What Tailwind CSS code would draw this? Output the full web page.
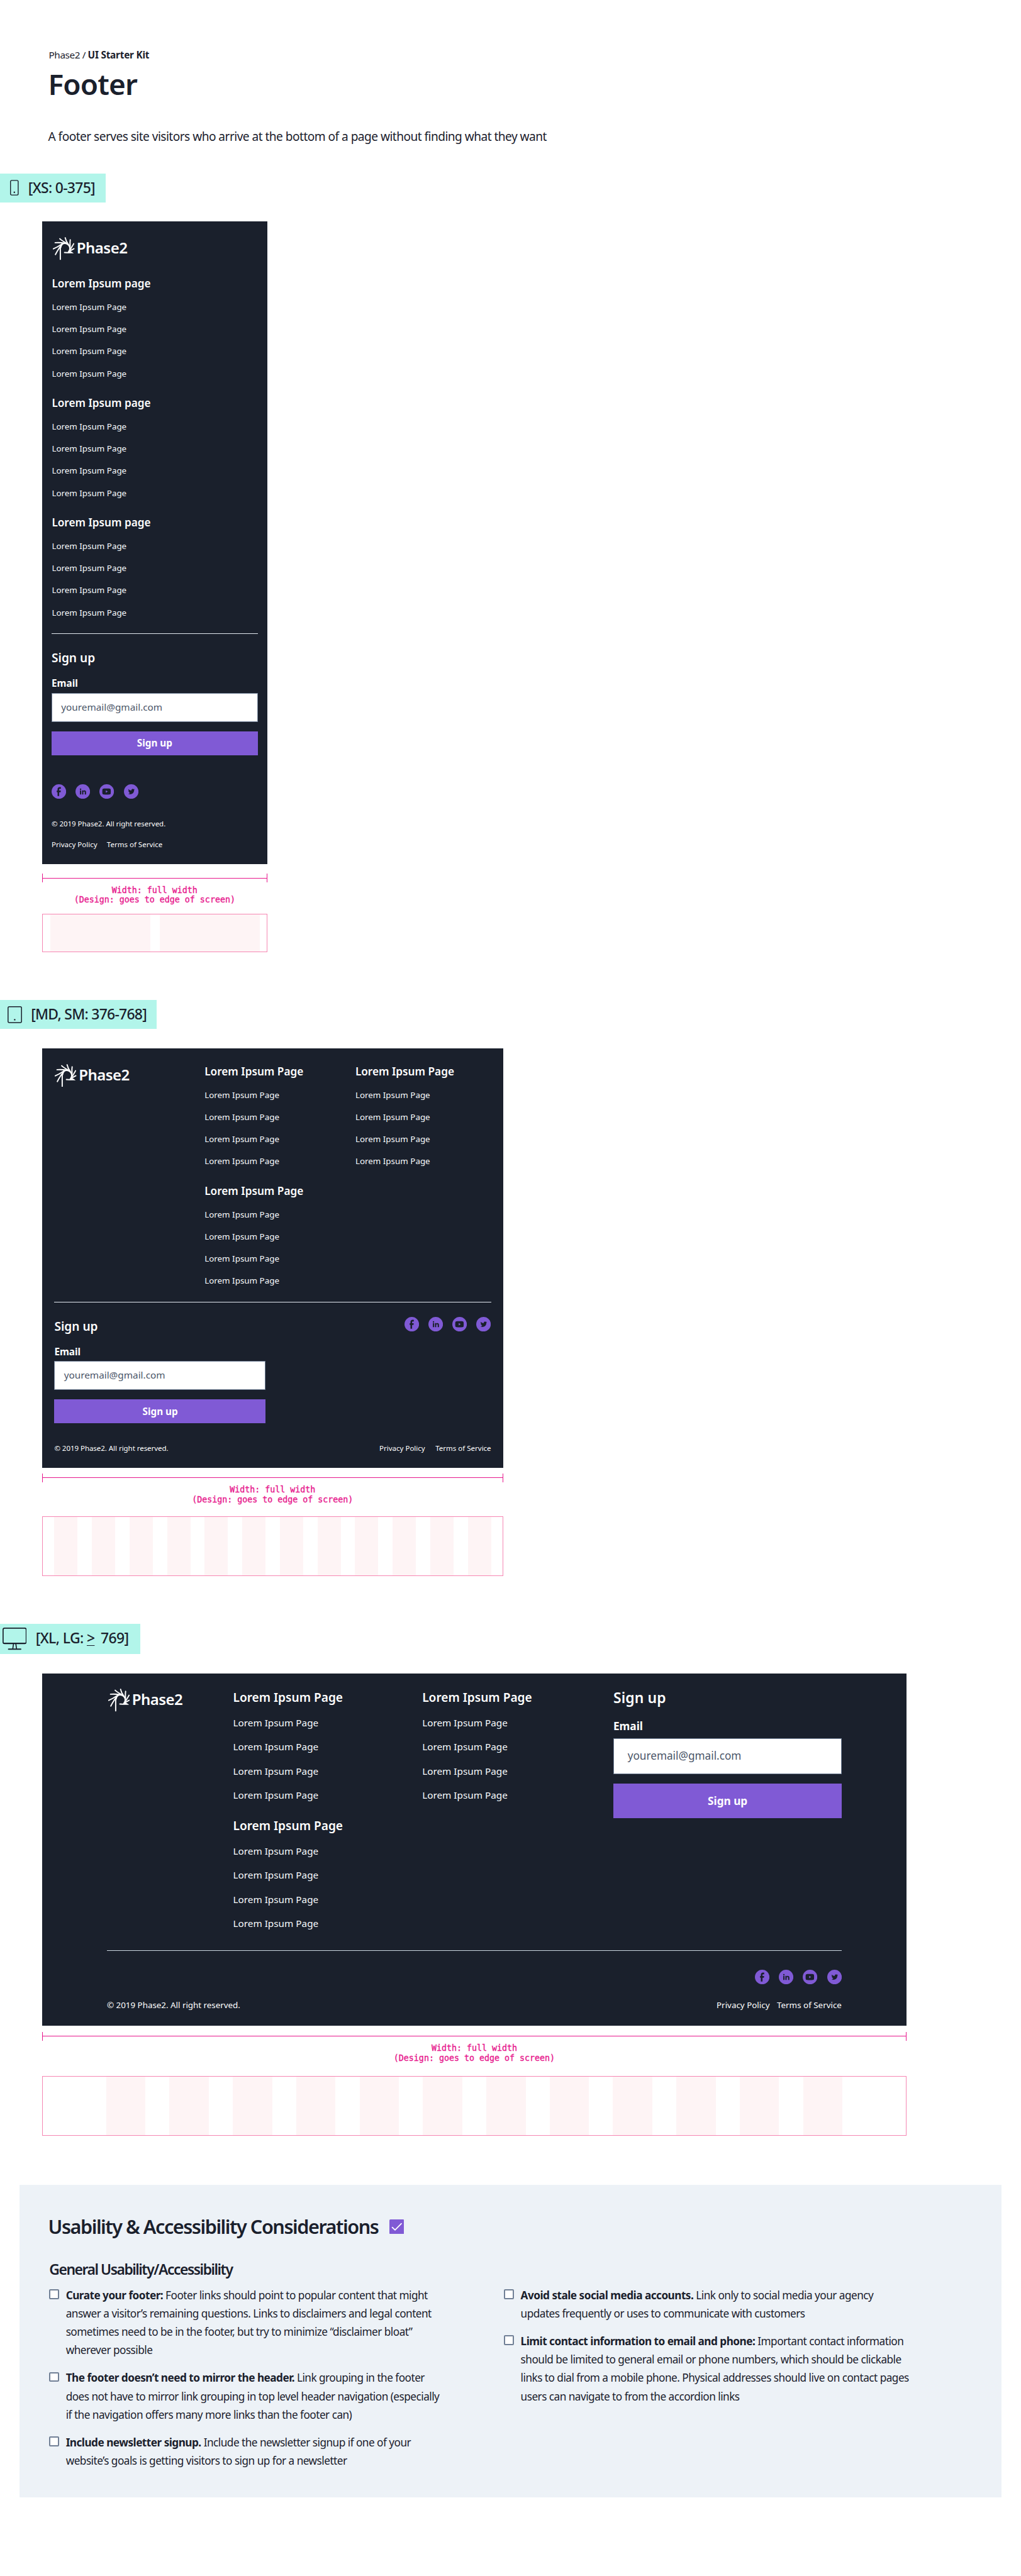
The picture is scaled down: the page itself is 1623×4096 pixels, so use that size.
<!DOCTYPE html>
<html lang="en">
<head>
<meta charset="utf-8">
<title>Footer – UI Starter Kit</title>
<script src="https://cdn.jsdelivr.net/npm/@tailwindcss/browser@4"></script>
</head>
<body class="bg-white text-[#1a202c] font-['Noto_Sans',sans-serif]">

<!-- Shared symbols -->
<svg width="0" height="0" class="absolute">
  <symbol id="burst" viewBox="27 92 160 169">
    <g fill="none" stroke="#fff" stroke-width="9" stroke-linecap="round">
      <path d="M82 256V164"/><path d="M46 220C58 198 70 176 84 160"/><path d="M31 178C52 170 72 158 92 144"/>
      <path d="M44 133C66 132 92 132 112 136"/><path d="M78 104C92 118 112 128 128 136"/><path d="M118 97C122 116 132 134 142 148"/>
      <path d="M155 112C152 130 154 146 154 164"/><path d="M180 141C174 154 164 166 157 180"/><path d="M183 177C172 182 162 188 154 194"/>
      <path d="M113 205C126 206 148 206 166 206C160 202 154 198 150 196"/>
      <path d="M84 168C88 144 104 136 118 137C138 140 152 156 153 172C154 182 150 192 142 203" stroke-width="11"/>
    </g>
  </symbol>
  <symbol id="facebook" viewBox="0 0 24 24"><circle cx="12" cy="12" r="12" fill="#805ad5"/><path fill="#1a202c" d="M15.3 4.9V7.4H13.9C12.8 7.4 12.5 7.9 12.5 8.7V10.4H15.2L14.8 13.1H12.5V19.3H9.8V13.1H8.5V10.4H9.8V8.2C9.8 6 11.2 4.7 13.4 4.7C14.3 4.7 15 4.8 15.3 4.9Z"/></symbol>
  <symbol id="linkedin" viewBox="0 0 24 24"><circle cx="12" cy="12" r="12" fill="#805ad5"/><path fill="#1a202c" d="M7.3 10.2H9.4V16.9H7.3ZM8.35 6.9A1.22 1.22 0 1 1 8.34 9.34A1.22 1.22 0 0 1 8.35 6.9ZM10.8 10.2H12.8V11.1C13.1 10.5 13.8 10 14.8 10C16.9 10 17.4 11.4 17.4 13.2V16.9H15.3V13.6C15.3 12.8 15.3 11.8 14.2 11.8C13.1 11.8 12.9 12.7 12.9 13.5V16.9H10.8Z"/></symbol>
  <symbol id="youtube" viewBox="0 0 24 24"><circle cx="12" cy="12" r="12" fill="#805ad5"/><path fill="#1a202c" fill-rule="evenodd" d="M6.8 7.2C9 6.9 14.6 6.9 16.8 7.2C18 7.4 18.5 7.9 18.6 9C18.8 10.8 18.8 13.2 18.6 15C18.5 16.1 18 16.6 16.8 16.8C14.6 17.1 9 17.1 6.8 16.8C5.6 16.6 5.1 16.1 4.9 15C4.7 13.2 4.7 10.8 4.9 9C5.1 7.9 5.6 7.4 6.8 7.2ZM10.6 10.1V13.9L13.8 12Z"/></symbol>
  <symbol id="twitter" viewBox="0 0 24 24"><circle cx="12" cy="12" r="12" fill="#805ad5"/><path fill="#1a202c" transform="translate(6.9 6.65) scale(.454)" d="M23.953 4.57a10 10 0 01-2.825.775 4.958 4.958 0 002.163-2.723c-.951.555-2.005.959-3.127 1.184a4.92 4.92 0 00-8.384 4.482C7.69 8.095 4.067 6.13 1.64 3.162a4.822 4.822 0 00-.666 2.475c0 1.71.87 3.213 2.188 4.096a4.904 4.904 0 01-2.228-.616v.06a4.923 4.923 0 003.946 4.827 4.996 4.996 0 01-2.212.085 4.936 4.936 0 004.604 3.417 9.867 9.867 0 01-6.102 2.105c-.39 0-.779-.023-1.17-.067a13.995 13.995 0 007.557 2.209c9.053 0 13.998-7.496 13.998-13.985 0-.21 0-.42-.015-.63A9.935 9.935 0 0024 4.59z"/></symbol>
</svg>

<main class="w-[1623px] h-[4096px] overflow-hidden">

<!-- Page header -->
<header class="h-[275.8px] pt-[76.6px] pl-[76.5px] whitespace-nowrap">
  <p class="text-[15.3px] leading-[20px] tracking-[-0.4px] pl-[1px]">Phase2 / <span class="font-bold tracking-[-0.2px]">UI Starter Kit</span></p>
  <h1 class="mt-[6.5px] text-[45.9px] leading-[60px] font-semibold tracking-[-0.86px]">Footer</h1>
  <p class="mt-[39.5px] text-[19.1px] leading-[28px] tracking-[-0.53px]">A footer serves site visitors who arrive at the bottom of a page without finding what they want</p>
</header>

<!-- XS -->
<section class="h-[1314.6px]">
  <div class="flex w-[168.3px] h-[46px] bg-[#b2f5ea] whitespace-nowrap">
    <svg class="shrink-0 mt-[10.5px] ml-[16.2px] w-[14px] h-[25px]" viewBox="0 0 14 25" fill="none" stroke="#1a202c" stroke-width="1.4"><rect x=".7" y=".9" width="12.2" height="23.2" rx="1.8"/><circle cx="6.8" cy="19.8" r="1.2" fill="#1a202c" stroke="none"/></svg>
    <h2 class="ml-[14.6px] text-[22.9px] leading-[45.4px] font-medium tracking-[-0.67px]">[XS: 0-375]</h2>
  </div>
  <div class="ml-[66.7px] mt-[30.3px] w-[358.3px]">
    <footer class="h-[1021.6px] bg-[#1a202c] text-white px-[15.3px] pt-[24.9px]">
      <div class="flex ml-[2px] h-[36.5px]">
        <svg class="w-[34.6px] h-[36.6px] shrink-0"><use href="#burst"/></svg>
        <span class="ml-[3.2px] text-[24px] leading-[33px] font-semibold tracking-[-0.52px]">Phase2</span>
      </div>
      <nav class="mt-[15px] flex flex-col gap-[6.5px] pl-[0.4px] text-[13.4px] leading-[35.2px] text-[#f7fafc]">
        <div><h3 class="pt-[1.4px] text-[17.2px] leading-[41.2px] font-semibold text-white">Lorem Ipsum page</h3><ul><li>Lorem Ipsum Page</li><li>Lorem Ipsum Page</li><li>Lorem Ipsum Page</li><li>Lorem Ipsum Page</li></ul></div>
        <div><h3 class="pt-[1.4px] text-[17.2px] leading-[41.2px] font-semibold text-white">Lorem Ipsum page</h3><ul><li>Lorem Ipsum Page</li><li>Lorem Ipsum Page</li><li>Lorem Ipsum Page</li><li>Lorem Ipsum Page</li></ul></div>
        <div><h3 class="pt-[1.4px] text-[17.2px] leading-[41.2px] font-semibold text-white">Lorem Ipsum page</h3><ul><li>Lorem Ipsum Page</li><li>Lorem Ipsum Page</li><li>Lorem Ipsum Page</li><li>Lorem Ipsum Page</li></ul></div>
      </nav>
      <div class="mt-[15.5px] h-px bg-[#e2e8f0]"></div>
      <h3 class="mt-[22.8px] text-[19.1px] leading-[30px] font-semibold">Sign up</h3>
      <p class="mt-[15.1px] text-[15.3px] leading-[20px] font-bold">Email</p>
      <div class="mt-[5.9px] h-[45.7px] border border-[#718096] bg-white pl-[14.3px] text-[15.3px] leading-[42.5px] text-[#4a5568]">youremail@gmail.com</div>
      <div class="mt-[15.2px] h-[37.8px] bg-[#805ad5] text-center text-[15.3px] leading-[37.8px] font-bold">Sign up</div>
      <div class="mt-[46.2px] flex gap-[15px]">
        <svg class="size-[23.2px]"><use href="#facebook"/></svg><svg class="size-[23.2px]"><use href="#linkedin"/></svg><svg class="size-[23.2px]"><use href="#youtube"/></svg><svg class="size-[23.2px]"><use href="#twitter"/></svg>
      </div>
      <p class="mt-[30.3px] text-[11.5px] leading-[20px] tracking-[-0.04px]">© 2019 Phase2. All right reserved.</p>
      <p class="mt-[12.5px] flex gap-[15.3px] text-[11.5px] leading-[20px]"><span>Privacy Policy</span><span>Terms of Service</span></p>
    </footer>
    <div class="mt-[15.3px] flex h-[14.2px] items-center border-x border-[#e7168c]"><div class="h-px grow bg-[#e7168c]"></div></div>
    <p class="mt-[4.7px] text-center text-[13.3px] leading-[15.3px] text-[#e7168c] font-['DejaVu_Sans_Mono',monospace] [-webkit-text-stroke:0.35px] whitespace-nowrap">Width: full width<br>(Design: goes to edge of screen)</p>
    <div class="mt-[14.6px] flex h-[61px] gap-[15.6px] border border-[#f687b3] pl-[12.6px] pr-[11.4px]"><div class="grow bg-[#fef4f5]"></div><div class="grow bg-[#fef4f5]"></div></div>
  </div>
</section>

<!-- MD, SM -->
<section class="h-[992px]">
  <div class="flex w-[249.1px] h-[46px] bg-[#b2f5ea] whitespace-nowrap">
    <svg class="shrink-0 mt-[9.4px] ml-[11.5px] w-[23px] h-[27px]" viewBox="0 0 23 27" fill="none" stroke="#1a202c" stroke-width="1.5"><rect x=".8" y=".8" width="21.4" height="25.2" rx="2"/><circle cx="11.4" cy="21.4" r="1.2" fill="#1a202c" stroke="none"/></svg>
    <h2 class="ml-[14.7px] text-[22.9px] leading-[45px] font-medium tracking-[-0.7px]">[MD, SM: 376-768]</h2>
  </div>
  <div class="ml-[66.8px] mt-[30.6px] w-[733px]">
    <footer class="h-[667.3px] bg-[#1a202c] text-white pl-[19.6px] pr-[19.2px] pt-[14.3px]">
      <div class="flex">
        <div class="flex w-[238.8px] pl-[1px] pt-[10.6px]">
          <svg class="w-[34.6px] h-[36.6px] shrink-0"><use href="#burst"/></svg>
          <span class="ml-[3.2px] text-[24px] leading-[33px] font-semibold tracking-[-0.52px]">Phase2</span>
        </div>
        <nav class="grid grid-cols-[239.7px_200px] gap-y-[6.5px] text-[13.4px] leading-[35.2px] text-[#f7fafc]">
          <div><h3 class="pt-[1.4px] text-[17.2px] leading-[41.2px] font-semibold text-white">Lorem Ipsum Page</h3><ul><li>Lorem Ipsum Page</li><li>Lorem Ipsum Page</li><li>Lorem Ipsum Page</li><li>Lorem Ipsum Page</li></ul></div>
          <div><h3 class="pt-[1.4px] text-[17.2px] leading-[41.2px] font-semibold text-white">Lorem Ipsum Page</h3><ul><li>Lorem Ipsum Page</li><li>Lorem Ipsum Page</li><li>Lorem Ipsum Page</li><li>Lorem Ipsum Page</li></ul></div>
          <div><h3 class="pt-[1.4px] text-[17.2px] leading-[41.2px] font-semibold text-white">Lorem Ipsum Page</h3><ul><li>Lorem Ipsum Page</li><li>Lorem Ipsum Page</li><li>Lorem Ipsum Page</li><li>Lorem Ipsum Page</li></ul></div>
        </nav>
      </div>
      <div class="mt-[15.3px] h-px bg-[#e2e8f0]"></div>
      <div class="mt-[22.7px] flex justify-between">
        <div class="w-[335.4px]">
          <h3 class="text-[19.1px] leading-[30.6px] font-semibold">Sign up</h3>
          <p class="mt-[14.6px] text-[15.3px] leading-[20px] font-bold">Email</p>
          <div class="mt-[5.7px] h-[45.7px] border border-[#718096] bg-white pl-[14.3px] text-[15.3px] leading-[42.9px] text-[#4a5568]">youremail@gmail.com</div>
          <div class="mt-[15px] h-[38.2px] bg-[#805ad5] pl-px text-center text-[15.3px] leading-[38.2px] font-bold">Sign up</div>
        </div>
        <div class="flex gap-[15px]">
          <svg class="size-[23.2px]"><use href="#facebook"/></svg><svg class="size-[23.2px]"><use href="#linkedin"/></svg><svg class="size-[23.2px]"><use href="#youtube"/></svg><svg class="size-[23.2px]"><use href="#twitter"/></svg>
        </div>
      </div>
      <div class="mt-[30px] flex justify-between text-[11.5px] leading-[20px]">
        <p class="tracking-[-0.04px]">© 2019 Phase2. All right reserved.</p>
        <p class="flex gap-[16.6px]"><span>Privacy Policy</span><span>Terms of Service</span></p>
      </div>
    </footer>
    <div class="mt-[8.5px] flex h-[14.1px] items-center border-x border-[#e7168c]"><div class="h-px grow bg-[#e7168c]"></div></div>
    <p class="mt-[4.6px] text-center text-[13.3px] leading-[15.3px] text-[#e7168c] font-['DejaVu_Sans_Mono',monospace] [-webkit-text-stroke:0.35px] whitespace-nowrap">Width: full width<br>(Design: goes to edge of screen)</p>
    <div class="mt-[18.7px] grid grid-cols-12 h-[95px] gap-[22.7px] border border-[#f687b3] pl-[18.6px] pr-[18.2px]">
      <div class="bg-[#fef4f5]"></div><div class="bg-[#fef4f5]"></div><div class="bg-[#fef4f5]"></div><div class="bg-[#fef4f5]"></div><div class="bg-[#fef4f5]"></div><div class="bg-[#fef4f5]"></div><div class="bg-[#fef4f5]"></div><div class="bg-[#fef4f5]"></div><div class="bg-[#fef4f5]"></div><div class="bg-[#fef4f5]"></div><div class="bg-[#fef4f5]"></div><div class="bg-[#fef4f5]"></div>
    </div>
  </div>
</section>

<!-- XL, LG -->
<section class="h-[891.4px]">
  <div class="flex w-[223.3px] h-[47.4px] bg-[#b2f5ea] whitespace-nowrap">
    <svg class="shrink-0 mt-[6.1px] ml-[3.8px] w-[38.6px] h-[35.4px]" viewBox="0 0 38.6 35.4" fill="none" stroke="#1a202c" stroke-width="1.7"><rect x=".9" y=".9" width="36.8" height="24.4" rx="2.4"/><path d="M1.6 25H37" stroke-width="2"/><path d="M17.4 26L16.3 34M21.2 26L22.3 34"/><path d="M9.6 34.2H29" stroke-width="1.9" stroke-linecap="round"/></svg>
    <h2 class="ml-[14.4px] text-[22.9px] leading-[45.4px] font-medium tracking-[-0.6px]">[XL, LG: <span class="underline decoration-[1.2px] underline-offset-[3px]">&gt;</span><span class="ml-[9.6px]">769]</span></h2>
  </div>
  <div class="ml-[66.7px] mt-[31px] w-[1374.5px]">
    <footer class="h-[560px] bg-[#1a202c] text-white pl-[103.3px] pr-[102.9px] pt-[16.7px]">
      <div class="flex h-[400.7px]">
        <div class="flex w-[200.5px] pl-[1.9px] pt-[7.9px]">
          <svg class="w-[34.6px] h-[36.6px] shrink-0"><use href="#burst"/></svg>
          <span class="ml-[3.2px] text-[24px] leading-[33px] font-semibold tracking-[-0.52px]">Phase2</span>
        </div>
        <nav class="grid grid-cols-[300.7px_303.8px] content-start gap-y-[8.4px] text-[15.3px] leading-[38.25px] text-[#f7fafc]">
          <div><h3 class="pt-[1.6px] text-[19.1px] leading-[41px] font-semibold text-white">Lorem Ipsum Page</h3><ul><li>Lorem Ipsum Page</li><li>Lorem Ipsum Page</li><li>Lorem Ipsum Page</li><li>Lorem Ipsum Page</li></ul></div>
          <div><h3 class="pt-[1.6px] text-[19.1px] leading-[41px] font-semibold text-white">Lorem Ipsum Page</h3><ul><li>Lorem Ipsum Page</li><li>Lorem Ipsum Page</li><li>Lorem Ipsum Page</li><li>Lorem Ipsum Page</li></ul></div>
          <div><h3 class="pt-[1.6px] text-[19.1px] leading-[41px] font-semibold text-white">Lorem Ipsum Page</h3><ul><li>Lorem Ipsum Page</li><li>Lorem Ipsum Page</li><li>Lorem Ipsum Page</li><li>Lorem Ipsum Page</li></ul></div>
        </nav>
        <div class="grow pt-[5px]">
          <h3 class="text-[22.9px] leading-[36px] font-semibold tracking-[0.1px]">Sign up</h3>
          <p class="mt-[14.3px] text-[17.2px] leading-[24px] font-bold">Email</p>
          <div class="mt-[7.7px] h-[56.5px] border border-[#718096] bg-white pl-[21.7px] text-[17.2px] leading-[54.8px] text-[#4a5568]">youremail@gmail.com</div>
          <div class="mt-[15.2px] h-[54.8px] bg-[#805ad5] text-center text-[17.2px] leading-[55px] font-bold">Sign up</div>
        </div>
      </div>
      <div class="mt-[22.4px] h-px bg-[#cbd5e0]"></div>
      <div class="mt-[30.4px] mr-[0.4px] flex justify-end gap-[15.1px]">
        <svg class="size-[23.2px]"><use href="#facebook"/></svg><svg class="size-[23.2px]"><use href="#linkedin"/></svg><svg class="size-[23.2px]"><use href="#youtube"/></svg><svg class="size-[23.2px]"><use href="#twitter"/></svg>
      </div>
      <div class="mt-[20.5px] mr-[0.4px] flex justify-between text-[13.4px] leading-[24px]">
        <p class="tracking-[-0.02px]">© 2019 Phase2. All right reserved.</p>
        <p class="flex gap-[11.5px]"><span>Privacy Policy</span><span>Terms of Service</span></p>
      </div>
    </footer>
    <div class="mt-[10px] flex h-[14.4px] items-center border-x border-[#e7168c]"><div class="h-px grow bg-[#e7168c]"></div></div>
    <p class="mt-[4.2px] text-center text-[13.3px] leading-[15.3px] text-[#e7168c] font-['DejaVu_Sans_Mono',monospace] [-webkit-text-stroke:0.35px] whitespace-nowrap">Width: full width<br>(Design: goes to edge of screen)</p>
    <div class="mt-[20.9px] grid grid-cols-12 h-[95.2px] gap-[38.2px] border border-[#f687b3] pl-[100.9px] pr-[101px]">
      <div class="bg-[#fef4f5]"></div><div class="bg-[#fef4f5]"></div><div class="bg-[#fef4f5]"></div><div class="bg-[#fef4f5]"></div><div class="bg-[#fef4f5]"></div><div class="bg-[#fef4f5]"></div><div class="bg-[#fef4f5]"></div><div class="bg-[#fef4f5]"></div><div class="bg-[#fef4f5]"></div><div class="bg-[#fef4f5]"></div><div class="bg-[#fef4f5]"></div><div class="bg-[#fef4f5]"></div>
    </div>
  </div>
</section>

<!-- Considerations -->
<section class="ml-[30.6px] w-[1561.7px] h-[497.5px] bg-[#edf2f7] pl-[45.9px] pt-[46.5px] whitespace-nowrap">
  <div class="flex h-[40px]">
    <h2 class="w-[542.2px] text-[30.6px] leading-[40px] font-semibold tracking-[-1.45px]">Usability &amp; Accessibility Considerations</h2>
    <svg class="mt-[8.8px] size-[23.3px]" viewBox="0 0 23.3 23.3"><rect width="23.3" height="23.3" rx="1.6" fill="#805ad5"/><path d="M4.6 12.6L9 16.8L19 6.6" fill="none" stroke="#fff" stroke-width="1.8" stroke-linecap="round"/></svg>
  </div>
  <h3 class="mt-[33.7px] pl-[1.8px] text-[22.9px] leading-[30px] font-semibold tracking-[-1.45px]">General Usability/Accessibility</h3>
  <div class="mt-[10.7px] flex text-[17.2px] leading-[29.2px] tracking-[-0.515px]">
    <ul class="flex w-[724.6px] flex-col gap-[15px] pl-[1.7px]">
      <li class="flex gap-[10.9px]"><span class="mt-[5.4px] size-[15.6px] shrink-0 rounded-[2px] border-2 border-[#718096] bg-white"></span><p><b>Curate your footer:</b> Footer links should point to popular content that might<br>answer a visitor’s remaining questions. Links to disclaimers and legal content<br>sometimes need to be in the footer, but try to minimize “disclaimer bloat”<br>wherever possible</p></li>
      <li class="flex gap-[10.9px]"><span class="mt-[5.4px] size-[15.6px] shrink-0 rounded-[2px] border-2 border-[#718096] bg-white"></span><p><b>The footer doesn’t need to mirror the header.</b> Link grouping in the footer<br>does not have to mirror link grouping in top level header navigation (especially<br>if the navigation offers many more links than the footer can)</p></li>
      <li class="flex gap-[10.9px]"><span class="mt-[5.4px] size-[15.6px] shrink-0 rounded-[2px] border-2 border-[#718096] bg-white"></span><p><b>Include newsletter signup.</b> Include the newsletter signup if one of your<br>website’s goals is getting visitors to sign up for a newsletter</p></li>
    </ul>
    <ul class="flex flex-col gap-[15px]">
      <li class="flex gap-[10.9px]"><span class="mt-[5.4px] size-[15.6px] shrink-0 rounded-[2px] border-2 border-[#718096] bg-white"></span><p><b>Avoid stale social media accounts.</b> Link only to social media your agency<br>updates frequently or uses to communicate with customers</p></li>
      <li class="flex gap-[10.9px]"><span class="mt-[5.4px] size-[15.6px] shrink-0 rounded-[2px] border-2 border-[#718096] bg-white"></span><p><b>Limit contact information to email and phone:</b> Important contact information<br>should be limited to general email or phone numbers, which should be clickable<br>links to dial from a mobile phone. Physical addresses should live on contact pages<br>users can navigate to from the accordion links</p></li>
    </ul>
  </div>
</section>
</main>
</body>
</html>
